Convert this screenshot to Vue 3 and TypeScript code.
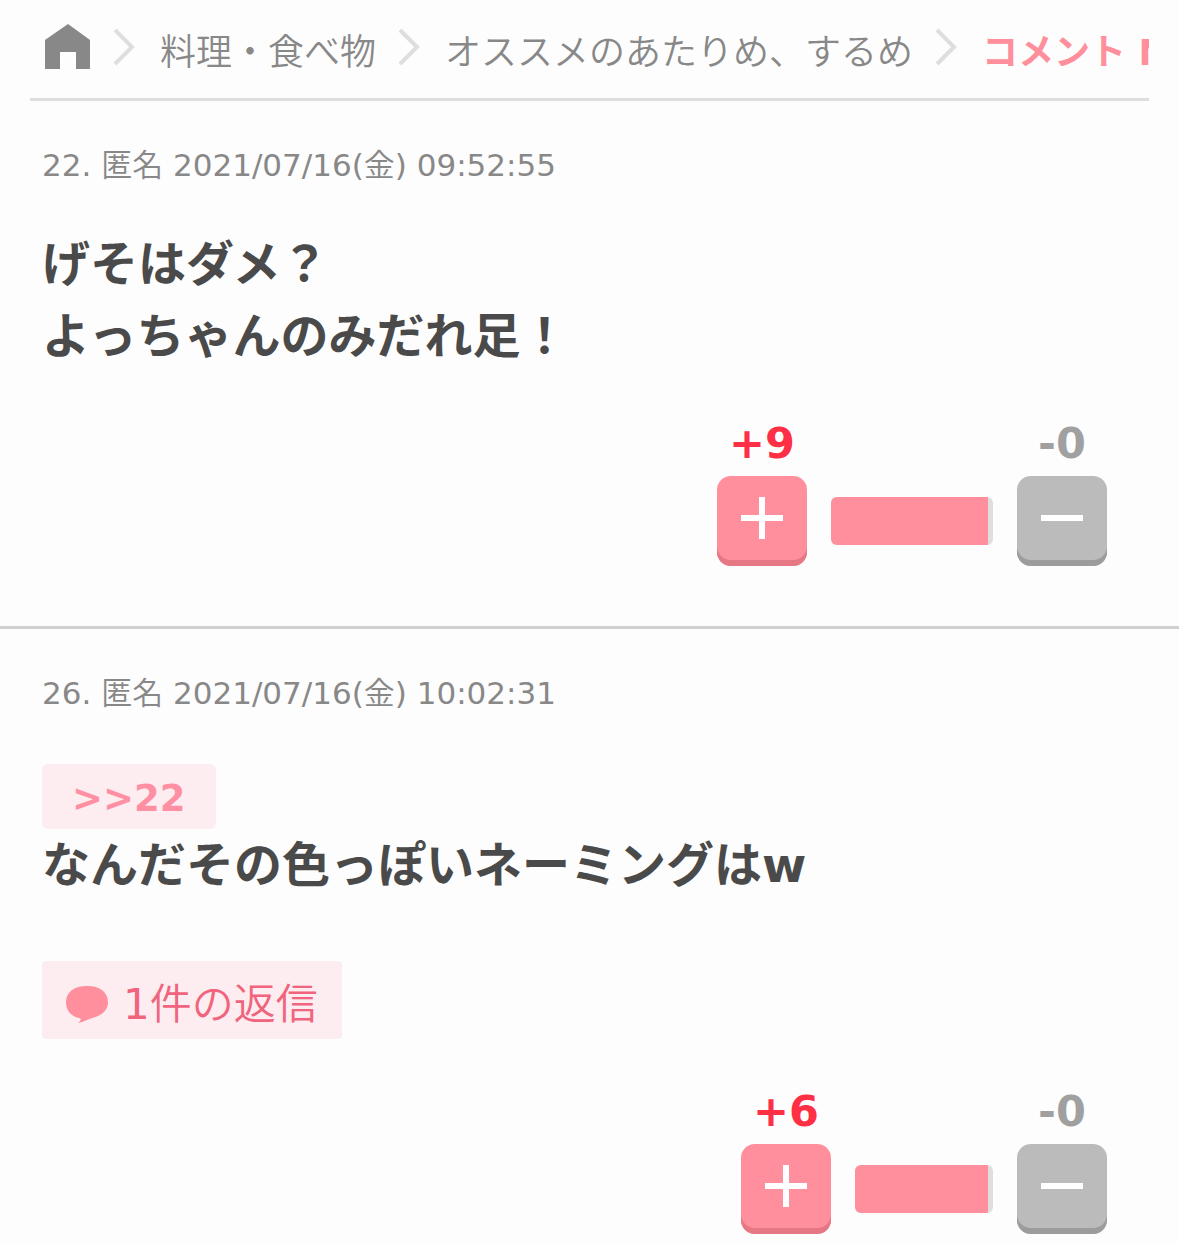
<script setup lang="ts">
interface Comment {
  id: number
  name: string
  date: string
  lines: string[]
  anchor?: number
  replies?: number
  plus: number
  minus: number
}

const comments: Comment[] = [
  {
    id: 22,
    name: '匿名',
    date: '2021/07/16(金) 09:52:55',
    lines: ['げそはダメ？', 'よっちゃんのみだれ足！'],
    plus: 9,
    minus: 0,
  },
  {
    id: 26,
    name: '匿名',
    date: '2021/07/16(金) 10:02:31',
    lines: ['なんだその色っぽいネーミングはw'],
    anchor: 22,
    replies: 1,
    plus: 6,
    minus: 0,
  },
]

const barWidth = (c: Comment): string => `${90 + (c.plus + c.minus) * 8}px`
</script>

<template>
  <div class="page">
    <nav class="crumbs" aria-label="パンくず">
      <a class="home" href="#" aria-label="ホーム">
        <svg width="46" height="46" viewBox="0 0 46 46" aria-hidden="true">
          <path d="M23 0 45 16V45H31V28H15V45H0V16Z" fill="#888" />
        </svg>
      </a>
      <svg class="chev" width="22" height="38" viewBox="0 0 22 38" aria-hidden="true">
        <path d="M2 2 19 19 2 36" fill="none" stroke="#dedede" stroke-width="4" />
      </svg>
      <a class="crumb" href="#">料理・食べ物</a>
      <svg class="chev" width="22" height="38" viewBox="0 0 22 38" aria-hidden="true">
        <path d="M2 2 19 19 2 36" fill="none" stroke="#dedede" stroke-width="4" />
      </svg>
      <a class="crumb" href="#">オススメのあたりめ、するめ</a>
      <svg class="chev" width="22" height="38" viewBox="0 0 22 38" aria-hidden="true">
        <path d="M2 2 19 19 2 36" fill="none" stroke="#dedede" stroke-width="4" />
      </svg>
      <strong class="crumb">コメント N</strong>
    </nav>

    <main>
      <article v-for="c in comments" :key="c.id" class="comment">
        <p class="meta">{{ c.id }}. {{ c.name }} {{ c.date }}</p>
        <div class="body">
          <a v-if="c.anchor" class="anchor" href="#">&gt;&gt;{{ c.anchor }}</a>
          <p v-for="line in c.lines" :key="line">{{ line }}</p>
        </div>
        <button v-if="c.replies" type="button" class="replies">
          <svg width="42" height="37" viewBox="0 0 42 37" aria-hidden="true">
            <path
              d="M21 0C34 0 42 6 42 16.500C42 24 36 29.500 28 31.500C23 33 17 36 12 37C14 35.500 15 34 14.500 32.500C6 31 0 25 0 16.500C0 6 8 0 21 0Z"
              fill="#ff8f9c"
            />
          </svg>
          <span>{{ c.replies }}件の返信</span>
        </button>
        <div class="votes">
          <div class="vote plus">
            <span class="count">+{{ c.plus }}</span>
            <button type="button" aria-label="プラス">
              <svg width="42" height="42" viewBox="0 0 42 42" aria-hidden="true">
                <path d="M0 21H42M21 0V42" stroke="#fff" stroke-width="6" />
              </svg>
            </button>
          </div>
          <div class="bar" :style="{ width: barWidth(c) }"><div class="fill"></div></div>
          <div class="vote minus">
            <span class="count">-{{ c.minus }}</span>
            <button type="button" aria-label="マイナス">
              <svg width="42" height="42" viewBox="0 0 42 42" aria-hidden="true">
                <path d="M0 21H42" stroke="#fff" stroke-width="6" />
              </svg>
            </button>
          </div>
        </div>
      </article>
    </main>
  </div>
</template>

<style>
body {
  background: #fdfdfd;
}
</style>

<style scoped>
.page {
  --thin: "DejaVu Sans", "Noto Sans CJK JP DemiLight", "Noto Sans CJK JP Light", "Noto Sans CJK JP", sans-serif;
  font-family: "DejaVu Sans", "Noto Sans CJK JP", sans-serif;
  color: #4a4a4a;
}
.crumbs {
  display: flex;
  align-items: center;
  margin: 0 30px;
  padding: 0 0 4px 15px;
  height: 94px;
  overflow: hidden;
  white-space: nowrap;
  border-bottom: 3px solid #dedede;
  font-size: 36px;
}
.crumbs > * {
  flex: none;
}
.crumb {
  padding-top: 3px;
}
.crumbs a {
  color: #888;
  font-family: var(--thin);
  text-decoration: none;
}
.crumbs strong {
  color: #ff8f9c;
  font-weight: 700;
}
.home {
  display: flex;
}
.crumbs .chev {
  margin: 0 25px 0 22px;
}
p {
  margin: 0;
}
.comment {
  display: flex;
  flex-direction: column;
  align-items: flex-start;
  padding: 42px 72px 60px 42px;
}
.comment + .comment {
  border-top: 3px solid #d0d0d0;
}
.comment:last-child {
  padding-bottom: 9px;
}
.meta {
  line-height: 45px;
  font-family: var(--thin);
  font-size: 31px;
  color: #888;
}
.body {
  margin-top: 40px;
  font-size: 48px;
  line-height: 72px;
  font-weight: 700;
}
.anchor {
  display: block;
  width: fit-content;
  margin-top: 8px;
  padding: 4px 30px 0;
  border-radius: 6px;
  background: #fdedf0;
  color: #ff8fa3;
  font-size: 37px;
  line-height: 61px;
  text-decoration: none;
}
.replies {
  display: flex;
  align-items: center;
  gap: 15px;
  height: 78px;
  margin-top: 60px;
  padding: 0 24px;
  border: 0;
  border-radius: 4px;
  background: #fdedf0;
  color: #f0647d;
  font-family: var(--thin);
  font-size: 42px;
}
.replies svg {
  margin-top: 8px;
}
.votes {
  display: flex;
  align-items: flex-end;
  align-self: flex-end;
  gap: 24px;
  margin-top: 48px;
}
.body + .votes {
  margin-top: 47px;
}
.vote {
  display: flex;
  flex-direction: column;
  align-items: center;
  gap: 9px;
}
.count {
  font-size: 43px;
  line-height: 48px;
  font-weight: 700;
}
.vote button {
  display: flex;
  align-items: center;
  justify-content: center;
  width: 90px;
  height: 90px;
  padding: 0 0 6px;
  border: 0;
  border-radius: 14px;
}
.plus .count {
  color: #ff2f45;
}
.plus button {
  background: #ff8f9c;
  box-shadow: inset 0 -6px 0 #e67886;
}
.minus .count {
  color: #a0a0a0;
}
.minus button {
  background: #bbb;
  box-shadow: inset 0 -6px 0 #9c9c9c;
}
.bar {
  height: 48px;
  margin-bottom: 21px;
  border-radius: 6px;
  overflow: hidden;
  background: #dedede;
}
.fill {
  height: 100%;
  margin-right: 5px;
  background: #ff8f9c;
}
</style>
